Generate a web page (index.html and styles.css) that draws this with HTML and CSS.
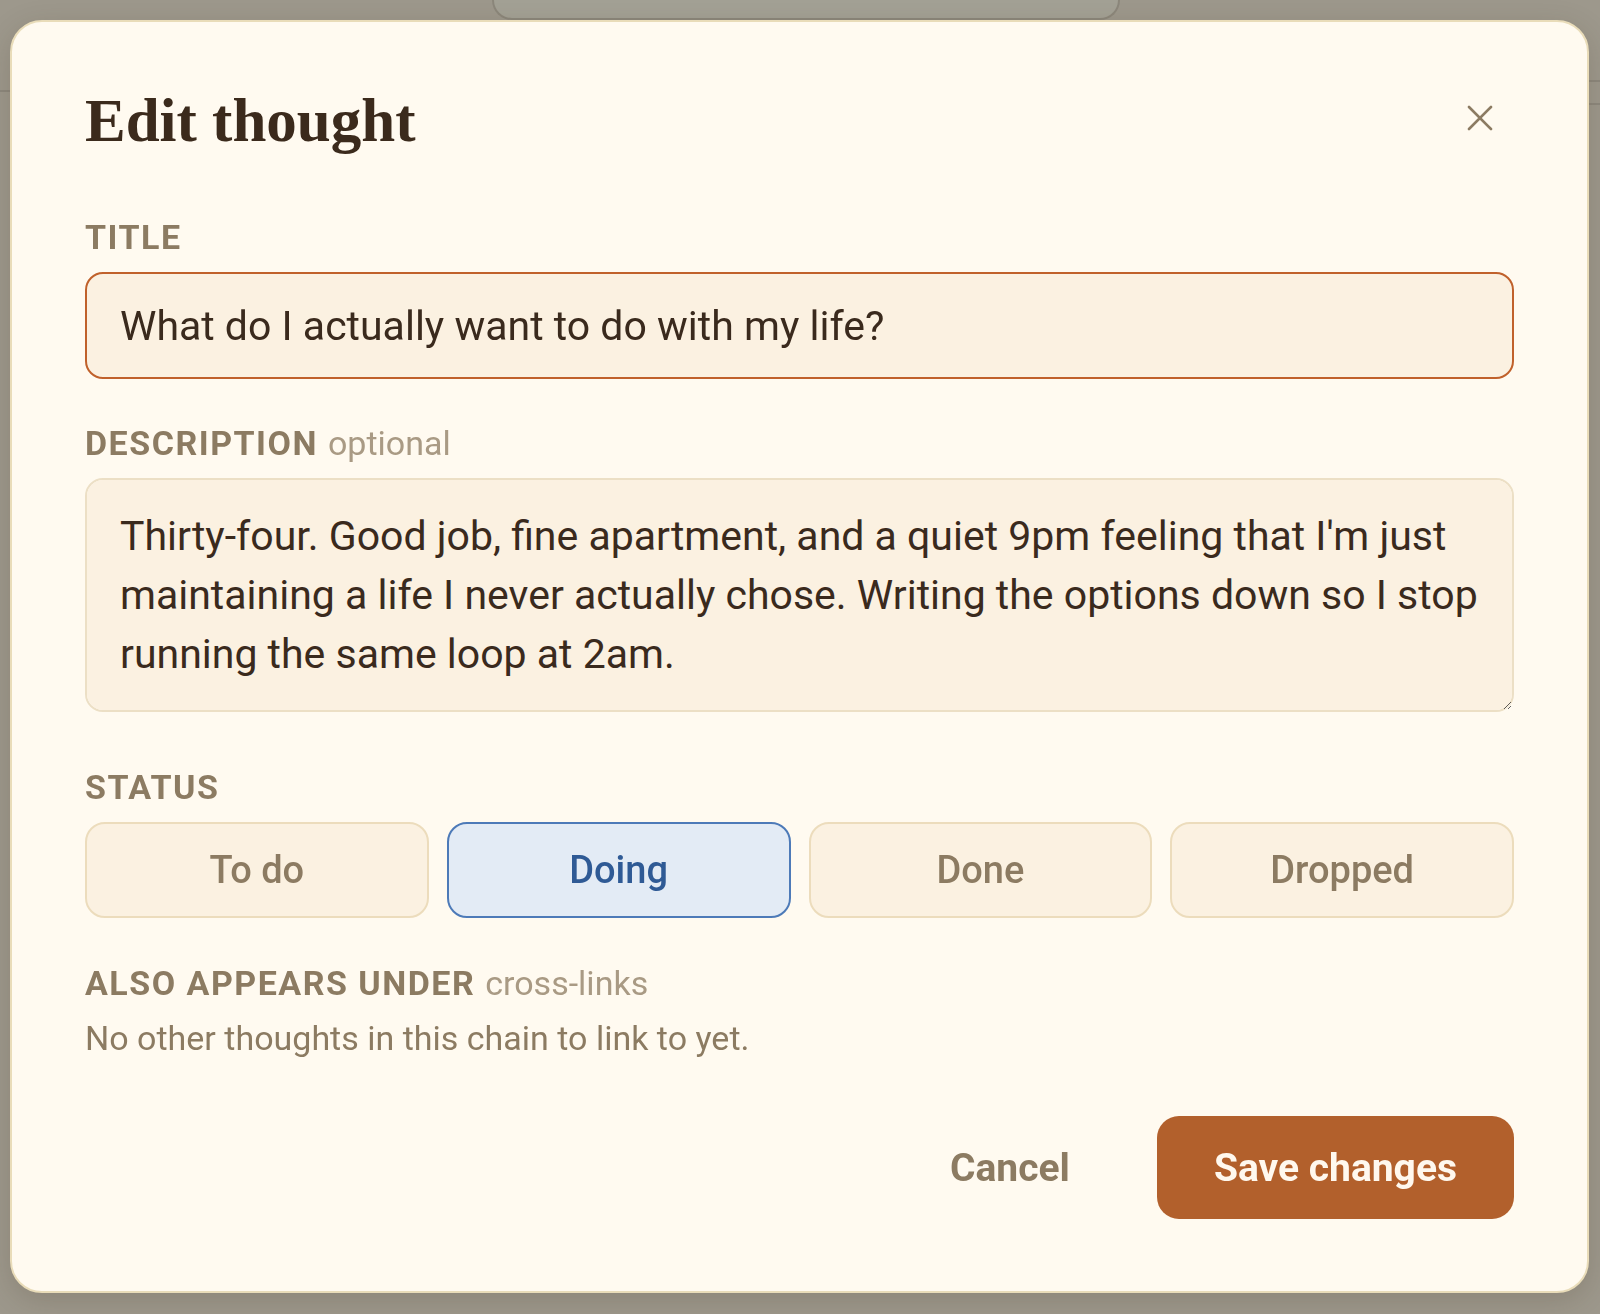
FILE: index.html
```html
<!DOCTYPE html>
<html lang="en">
  <head>
    <meta charset="UTF-8" />
    <meta name="viewport" content="width=device-width, initial-scale=1.0" />
    <title>Edit thought</title>
    <link rel="stylesheet" href="styles.css">
  </head>
  <body>
    <!-- Page behind the dialog -->
    <div class="page" aria-hidden="true">
      <div class="page-top">
        <div class="page-tab"></div>
      </div>
      <div class="page-body">
        <div class="page-col page-col-left">
          <div class="page-rule"></div>
        </div>
        <div class="page-col page-col-right">
          <div class="page-rule"></div>
          <div class="page-rule"></div>
        </div>
      </div>
    </div>

    <!-- Dialog -->
    <div class="overlay">
      <div class="modal" role="dialog" aria-labelledby="modal-title">
        <div class="modal-header">
          <h1 id="modal-title">Edit thought</h1>
          <button class="close-btn" type="button" aria-label="Close">
            <svg width="26" height="26" viewBox="0 0 26 26">
              <path d="M2 2 L24 24 M24 2 L2 24" stroke="currentColor" stroke-width="2.6" stroke-linecap="round" fill="none" />
            </svg>
          </button>
        </div>

        <label class="field-label" for="title">Title</label>
        <input class="text-input" id="title" type="text" value="What do I actually want to do with my life?">

        <label class="field-label" for="desc">Description <span class="label-hint">optional</span></label>
        <textarea class="text-area" id="desc" rows="3">Thirty-four. Good job, fine apartment, and a quiet 9pm feeling that I'm just maintaining a life I never actually chose. Writing the options down so I stop running the same loop at 2am.</textarea>

        <div class="field-label">Status</div>
        <div class="status-row">
          <button class="status-btn" type="button">To do</button>
          <button class="status-btn active" type="button">Doing</button>
          <button class="status-btn" type="button">Done</button>
          <button class="status-btn" type="button">Dropped</button>
        </div>

        <div class="field-label">Also appears under <span class="label-hint">cross-links</span></div>
        <p class="empty-note">No other thoughts in this chain to link to yet.</p>

        <div class="modal-footer">
          <button class="cancel-btn" type="button">Cancel</button>
          <button class="save-btn" type="button">Save changes</button>
        </div>
      </div>
    </div>
  </body>
</html>
```

FILE: styles.css
```css
html,
body {
  margin: 0;
  height: 100%;
}

body {
  font-family: Roboto, "Liberation Sans", sans-serif;
  background-color: #9d988c;
  overflow: hidden;
}

/* Page behind */
.page {
  height: 100%;
}

.page-top {
  display: flex;
  padding-left: 492px;
}

.page-tab {
  width: 624px;
  height: 18px;
  background-color: #a3a195;
  border: 2px solid #8c877b;
  border-top: none;
  border-radius: 0 0 22px 22px;
}

.page-body {
  display: flex;
  justify-content: space-between;
}

.page-col {
  width: 12px;
}

.page-col-left {
  padding-top: 70px;
}

.page-col-right {
  padding-top: 60px;
}

.page-rule {
  height: 2px;
  background-color: #8d887d;
  margin-bottom: 21px;
}

/* Dialog */
.overlay {
  position: fixed;
  inset: 0;
  display: flex;
  padding: 20px 11px 21px 10px;
}

.modal {
  flex: 1;
  display: flex;
  flex-direction: column;
  background-color: #fffaf0;
  border: 2px solid #e9dcb9;
  border-radius: 32px;
  padding: 69px 73px 72px 73px;
  box-shadow: 0 8px 30px rgba(60, 45, 20, 0.18);
}

.modal-header {
  display: flex;
  align-items: center;
  justify-content: space-between;
  height: 60px;
  margin-bottom: 66px;
}

.modal-header h1 {
  margin: 0;
  font-family: "Liberation Serif", "Times New Roman", serif;
  font-weight: 700;
  font-size: 61px;
  line-height: 60px;
  color: #3b2a1c;
}

.close-btn {
  display: flex;
  align-items: center;
  justify-content: center;
  width: 48px;
  height: 48px;
  margin-right: 10px;
  margin-top: -6px;
  padding: 0;
  border: none;
  background: none;
  color: #8c7b62;
  cursor: pointer;
}

.field-label {
  display: block;
  font-size: 34px;
  font-weight: 700;
  line-height: 40px;
  letter-spacing: 1.5px;
  text-transform: uppercase;
  color: #8c7b62;
  margin-bottom: 15px;
}

.label-hint {
  font-weight: 400;
  letter-spacing: 0;
  text-transform: none;
  color: #a99a84;
}

.text-input,
.text-area {
  box-sizing: border-box;
  width: 100%;
  font-family: Roboto, "Liberation Sans", sans-serif;
  font-size: 41px;
  color: #3a2a1d;
  background-color: #fbf1e1;
  border: 2px solid #ecdfc5;
  border-radius: 18px;
  outline: none;
}

.text-input {
  height: 107px;
  padding: 0 33px;
  border-color: #c0612b;
  margin-bottom: 44px;
}

.text-area {
  display: block;
  height: 234px;
  padding: 27px 20px 27px 33px;
  line-height: 59px;
  resize: vertical;
  margin-bottom: 55px;
}

.status-row {
  display: grid;
  grid-template-columns: repeat(4, 1fr);
  gap: 18px;
  margin-bottom: 45px;
}

.status-btn {
  height: 96px;
  font-family: Roboto, "Liberation Sans", sans-serif;
  font-size: 38px;
  font-weight: 500;
  color: #8c7b62;
  background-color: #fbf1e1;
  border: 2px solid #ecdcbc;
  border-radius: 20px;
  cursor: pointer;
}

.status-btn.active {
  color: #2f5a95;
  background-color: #e3ebf5;
  border-color: #4d7ab8;
}

.empty-note {
  margin: 0;
  font-size: 34px;
  line-height: 40px;
  color: #8c7b62;
}

.modal-footer {
  display: flex;
  justify-content: flex-end;
  align-items: center;
  gap: 57px;
  margin-top: 58px;
}

.cancel-btn {
  padding: 0 30px;
  height: 103px;
  font-family: Roboto, "Liberation Sans", sans-serif;
  font-size: 39px;
  font-weight: 700;
  color: #8c7b62;
  background: none;
  border: none;
  cursor: pointer;
}

.save-btn {
  height: 103px;
  padding: 0 57px;
  font-family: Roboto, "Liberation Sans", sans-serif;
  font-size: 39px;
  font-weight: 700;
  color: #fff8ee;
  background-color: #b2602c;
  border: none;
  border-radius: 22px;
  cursor: pointer;
}
```
